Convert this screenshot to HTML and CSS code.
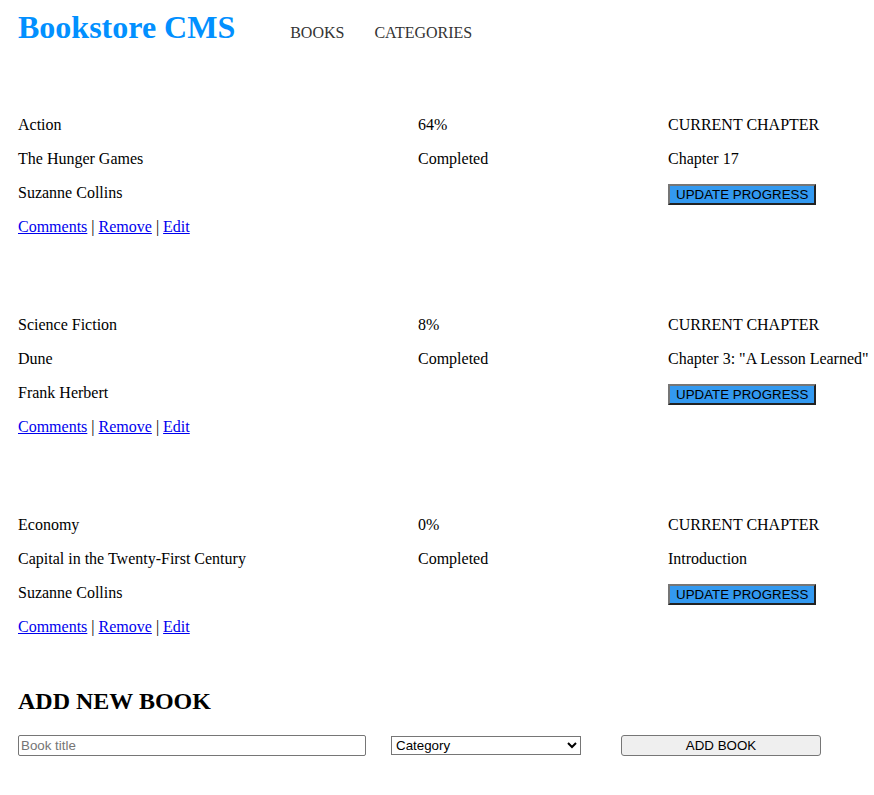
FILE: index.html
```html
<!DOCTYPE html>
<html lang="en">
<head>
<meta charset="utf-8">
<title>Bookstore CMS</title>
<link rel="stylesheet" href="styles.css">
</head>
<body>
<header class="site-header">
  <h1 class="logo">Bookstore CMS</h1>
  <nav>
    <ul class="nav-list">
      <li><a class="nav-link" href="#">BOOKS</a></li>
      <li><a class="nav-link" href="#">CATEGORIES</a></li>
    </ul>
  </nav>
</header>

<main>
  <section class="book-list">
    <article class="book">
      <div class="book-col">
        <p>Action</p>
        <p>The Hunger Games</p>
        <p>Suzanne Collins</p>
        <p><a href="#">Comments</a> | <a href="#">Remove</a> | <a href="#">Edit</a></p>
      </div>
      <div class="book-col">
        <p>64%</p>
        <p>Completed</p>
      </div>
      <div class="book-col">
        <p>CURRENT CHAPTER</p>
        <p>Chapter 17</p>
        <div class="progress-action"><button class="update-btn" type="button">UPDATE PROGRESS</button></div>
      </div>
    </article>

    <article class="book">
      <div class="book-col">
        <p>Science Fiction</p>
        <p>Dune</p>
        <p>Frank Herbert</p>
        <p><a href="#">Comments</a> | <a href="#">Remove</a> | <a href="#">Edit</a></p>
      </div>
      <div class="book-col">
        <p>8%</p>
        <p>Completed</p>
      </div>
      <div class="book-col">
        <p>CURRENT CHAPTER</p>
        <p>Chapter 3: "A Lesson Learned"</p>
        <div class="progress-action"><button class="update-btn" type="button">UPDATE PROGRESS</button></div>
      </div>
    </article>

    <article class="book">
      <div class="book-col">
        <p>Economy</p>
        <p>Capital in the Twenty-First Century</p>
        <p>Suzanne Collins</p>
        <p><a href="#">Comments</a> | <a href="#">Remove</a> | <a href="#">Edit</a></p>
      </div>
      <div class="book-col">
        <p>0%</p>
        <p>Completed</p>
      </div>
      <div class="book-col">
        <p>CURRENT CHAPTER</p>
        <p>Introduction</p>
        <div class="progress-action"><button class="update-btn" type="button">UPDATE PROGRESS</button></div>
      </div>
    </article>
  </section>

  <section class="add-book">
    <h2 class="add-title">ADD NEW BOOK</h2>
    <form class="add-form">
      <input class="title-input" type="text" placeholder="Book title">
      <select class="category-select">
        <option>Category</option>
        <option>Action</option>
        <option>Science Fiction</option>
        <option>Economy</option>
      </select>
      <button class="add-btn" type="button">ADD BOOK</button>
    </form>
  </section>
</main>
</body>
</html>
```

FILE: styles.css
```css
html, body {
  background: #fff;
}

body {
  margin: 0;
  padding: 0 18px;
  font-family: "Liberation Serif", "Times New Roman", serif;
  font-size: 16px;
  color: #000;
}

.site-header {
  display: flex;
  align-items: baseline;
  padding-top: 9px;
}

.logo {
  margin: 0;
  font-size: 32px;
  font-weight: bold;
  color: #0290ff;
}

.nav-list {
  list-style: none;
  display: flex;
  gap: 30px;
  margin: 0 0 0 55px;
  padding: 0;
}

.nav-link {
  color: #333;
  text-decoration: none;
  font-size: 16px;
}

.book-list {
  margin-top: 54px;
  display: flex;
  flex-direction: column;
  gap: 48px;
}

.book {
  display: grid;
  grid-template-columns: 400px 250px 1fr;
}

.book-col {
  display: flow-root;
  white-space: nowrap;
}

.book-col p {
  margin: 16px 0;
}

.book-col a {
  color: #0000ee;
}

.progress-action {
  margin: 16px 0;
}

.update-btn {
  display: block;
  font-family: "Liberation Sans", Arial, sans-serif;
  font-size: 13.33px;
  padding: 1px 6px;
  background: #3399f0;
  color: #000;
  border-style: solid;
  border-width: 2px;
  border-color: #767676 #222 #222 #767676;
  border-radius: 0;
}

.add-title {
  margin: 36px 0 0;
  font-size: 24px;
  font-weight: bold;
}

.add-form {
  display: flex;
  align-items: center;
  margin-top: 20px;
  padding-bottom: 30px;
}

.title-input {
  box-sizing: border-box;
  width: 348px;
  height: 21px;
  font-family: "Liberation Sans", Arial, sans-serif;
  font-size: 13.33px;
  padding: 1px 2px;
  border: 1px solid #767676;
  border-radius: 2px;
}

.title-input::placeholder {
  color: #757575;
}

.category-select {
  box-sizing: border-box;
  width: 190px;
  height: 19px;
  margin-left: 25px;
  font-family: "Liberation Sans", Arial, sans-serif;
  font-size: 13.33px;
  border: 1px solid #767676;
  border-radius: 0;
  background: #fff;
  color: #000;
}

.add-btn {
  box-sizing: border-box;
  width: 200px;
  height: 21px;
  margin-left: 40px;
  font-family: "Liberation Sans", Arial, sans-serif;
  font-size: 13.33px;
  background: #efefef;
  color: #000;
  border: 1px solid #767676;
  border-radius: 3px;
  padding: 1px 6px;
}
```
